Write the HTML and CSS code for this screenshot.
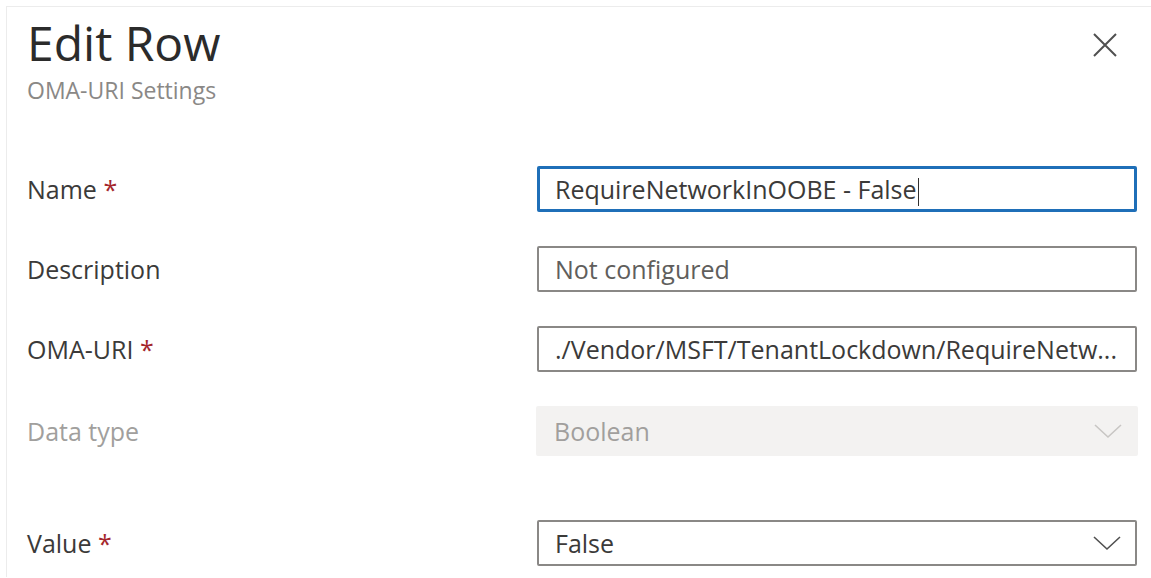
FILE: index.html
```html
<!DOCTYPE html>
<html lang="en">
<head>
    <meta charset="UTF-8">
    <meta name="viewport" content="width=device-width, initial-scale=1.0">
    <title>Edit Row</title>
    <link rel="stylesheet" href="styles.css">
</head>
<body>
    <div class="panel">
        <div class="header">
            <div class="titles">
                <h1 class="title">Edit Row</h1>
                <div class="subtitle">OMA-URI Settings</div>
            </div>
            <button class="close" aria-label="Close">
                <svg width="26" height="26" viewBox="0 0 26 26"><path d="M2 2 L24 24 M24 2 L2 24" stroke="#505050" stroke-width="2" fill="none"/></svg>
            </button>
        </div>

        <div class="form">
            <div class="row">
                <label class="label">Name <span class="req">*</span></label>
                <div class="field focused">RequireNetworkInOOBE - False<span class="caret"></span></div>
            </div>
            <div class="row">
                <label class="label">Description</label>
                <div class="field placeholder">Not configured</div>
            </div>
            <div class="row">
                <label class="label">OMA-URI <span class="req">*</span></label>
                <div class="field" title="./Vendor/MSFT/TenantLockdown/RequireNetworkInOOBE">./Vendor/MSFT/TenantLockdown/RequireNetw...</div>
            </div>
            <div class="row">
                <label class="label disabled">Data type</label>
                <div class="field select disabled">
                    <span>Boolean</span>
                    <svg class="chev" width="28" height="16" viewBox="0 0 28 16"><path d="M1 2 L14 14 L27 2" stroke="#c8c6c4" stroke-width="1.6" fill="none"/></svg>
                </div>
            </div>
            <div class="row value-row">
                <label class="label">Value <span class="req">*</span></label>
                <div class="field select">
                    <span>False</span>
                    <svg class="chev" width="28" height="16" viewBox="0 0 28 16"><path d="M1 2 L14 14 L27 2" stroke="#505050" stroke-width="1.6" fill="none"/></svg>
                </div>
            </div>
        </div>
    </div>
</body>
</html>
```

FILE: styles.css
```css
body { margin: 0; background: #fff; font-family: "Open Sans", "Noto Sans", sans-serif; color: #323130; }
.panel { margin: 6px 0 0 6px; border-top: 1px solid #ececec; border-left: 1px solid #ececec; height: 571px; box-sizing: border-box; padding: 0 14px 0 20px; }
.header { display: flex; justify-content: space-between; align-items: flex-start; }
.titles { padding-top: 6px; }
.title { margin: 0; font-size: 48px; font-weight: 400; line-height: 60px; color: #2b2b2b; }
.subtitle { font-size: 23px; color: #8a8886; line-height: 30px; margin-top: 2px; }
.close { background: none; border: none; padding: 0; margin: 25px 19px 0 0; cursor: pointer; }
.close svg { display: block; }
.form { margin-top: 61px; display: flex; flex-direction: column; gap: 34px; }
.row { display: grid; grid-template-columns: 1fr 600px; align-items: center; }
.value-row { margin-top: 30px; }
.label { font-size: 25px; color: #3b3a39; }
.label.disabled { color: #a19f9d; }
.req { color: #a4262c; }
.field { height: 46px; box-sizing: border-box; border: 2px solid #8a8886; border-radius: 2px; padding: 0 14px 0 16px; font-size: 25px; color: #3b3a39; white-space: nowrap; display: block; line-height: 42px; }
.field.focused { border: 3px solid #1f6fb8; line-height: 40px; padding-left: 15px; }
.field.placeholder { color: #605e5c; }
.caret { display: inline-block; width: 1px; height: 28px; background: #323130; vertical-align: middle; margin-left: 1px; }
.field.select { display: flex; justify-content: space-between; align-items: center; padding-right: 14px; }
.field.select.disabled { background: #f3f2f1; border-color: #f3f2f1; color: #a19f9d; height: 50px; margin: 0 -1px; }
.chev { display: block; }
```
